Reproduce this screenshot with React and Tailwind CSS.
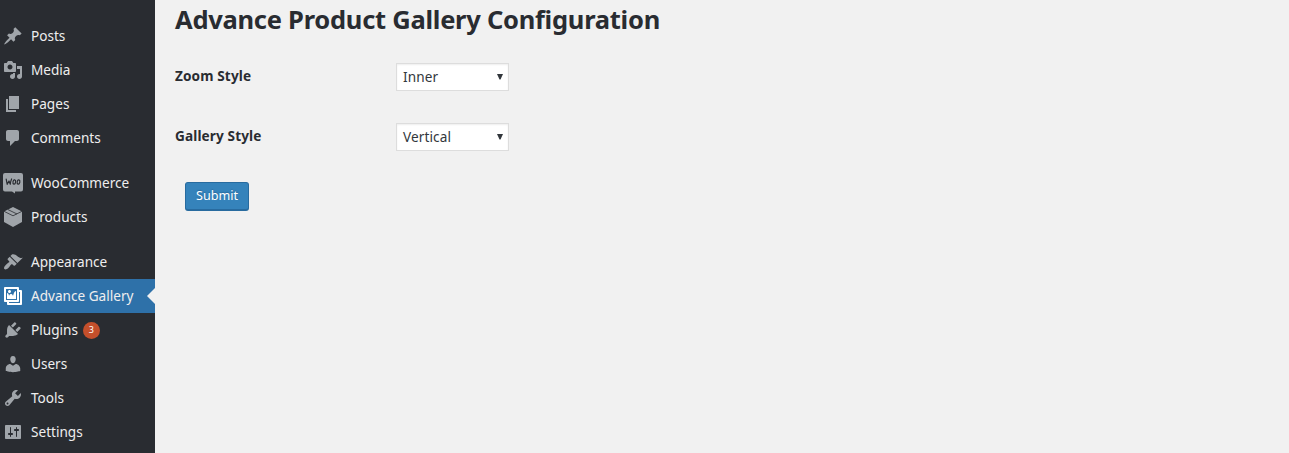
const ICONS = {
  posts: "M10.44 3.02l1.82-1.82 6.36 6.35-1.83 1.82c-1.05-.68-2.48-.57-3.41.36l-.75.75c-.92.93-1.04 2.35-.35 3.41l-1.83 1.82-2.41-2.41-2.8 2.79c-.42.42-3.38 2.71-3.8 2.29s1.86-3.39 2.28-3.81l2.79-2.79L4.1 9.36l1.83-1.82c1.05.69 2.48.57 3.4-.36l.75-.75c.93-.92 1.05-2.35.36-3.41z",
  media: "M13 11V4c0-.55-.45-1-1-1h-1.67L9 1H5L3.67 3H2c-.55 0-1 .45-1 1v7c0 .55.45 1 1 1h10c.55 0 1-.45 1-1zM7 4.5c1.38 0 2.5 1.12 2.5 2.5S8.38 9.5 7 9.5 4.5 8.38 4.5 7 5.62 4.5 7 4.5zM14 6h5v10.5c0 1.38-1.12 2.5-2.5 2.5S14 17.88 14 16.5s1.12-2.5 2.5-2.5c.17 0 .34.02.5.05V9h-3V6zm-4 8.05V13h2v3.5c0 1.38-1.12 2.5-2.5 2.5S7 17.88 7 16.5 8.12 14 9.5 14c.17 0 .34.02.5.05z",
  pages: "M6 15V2h10v13H6zm-1 1h8v2H3V5h2v11z",
  comments: "M5 2h9c1.1 0 2 .9 2 2v7c0 1.1-.9 2-2 2h-2l-5 5v-5H5c-1.1 0-2-.9-2-2V4c0-1.1.9-2 2-2z",
  appearance: "M14.48 11.06L7.41 3.99l1.5-1.5c.5-.56 2.3-.47 3.51.32 1.21.8 1.43 1.28 2.91 2.1 1.18.64 2.45 1.26 4.45.85zm-.71.71L6.7 4.7 4.93 6.47c-.39.39-.39 1.02 0 1.41l1.06 1.06c.39.39.39 1.03 0 1.42-.6.6-1.43 1.11-2.21 1.69-.35.26-.7.53-1.01.84C1.43 14.23.4 16.08 1.4 17.07c.99 1 2.84-.03 4.18-1.36.31-.31.58-.66.85-1.02.57-.78 1.08-1.61 1.69-2.21.39-.39 1.02-.39 1.41 0l1.06 1.06c.39.39 1.02.39 1.41 0z",
  gallery: "M16 4h1.96c.57 0 1.04.47 1.04 1.04v12.92c0 .57-.47 1.04-1.04 1.04H5.04C4.47 19 4 18.53 4 17.96V16H2.04C1.47 16 1 15.53 1 14.96V2.04C1 1.47 1.47 1 2.04 1h12.92c.57 0 1.04.47 1.04 1.04V4zM3 14h11V3H3v11zm5-8.5C8 4.67 7.33 4 6.5 4S5 4.67 5 5.5 5.67 7 6.5 7 8 6.33 8 5.5zm2 4.5s1-5 3-5v8H4V7c2 0 2 3 2 3s.33-2 2-2 2 2 2 2zm7 7V6h-1v8.96c0 .57-.47 1.04-1.04 1.04H6v1h11z",
  plugins: "M13.11 4.36L9.87 7.6 8 5.73l3.24-3.24c.35-.34 1.05-.2 1.56.32.52.51.66 1.21.31 1.55zm-8 1.77l.91-1.12 9.01 9.01-1.19.84c-.71.71-2.63 1.16-3.82 1.16H6.14L4.9 17.26c-.59.59-1.54.59-2.12 0-.59-.58-.59-1.53 0-2.12l1.24-1.24v-3.88c0-1.13.4-3.19 1.09-3.89zm7.26 3.97l3.24-3.24c.34-.35 1.04-.21 1.55.31.52.51.66 1.21.31 1.55l-3.24 3.25z",
  users: "M10 9.25c-2.27 0-2.73-3.44-2.73-3.44C7 4.02 7.82 2 9.97 2c2.16 0 2.98 2.02 2.71 3.81 0 0-.41 3.44-2.68 3.44zm0 2.57L12.72 10c2.39 0 4.52 2.33 4.52 4.53v2.49s-3.65 1.13-7.24 1.13c-3.65 0-7.24-1.13-7.24-1.13v-2.49c0-2.25 1.94-4.48 4.47-4.48z",
  tools: "M16.68 9.77c-1.34 1.34-3.3 1.67-4.95.99l-5.41 6.52c-.99.99-2.59.99-3.58 0s-.99-2.59 0-3.57l6.52-5.42c-.68-1.65-.35-3.61.99-4.95 1.28-1.28 3.12-1.62 4.72-1.06l-2.89 2.89 2.82 2.82 2.86-2.87c.53 1.58.18 3.39-1.08 4.65zM3.81 16.21c.4.39 1.04.39 1.43 0 .4-.4.4-1.04 0-1.43-.39-.4-1.03-.4-1.43 0-.39.39-.39 1.03 0 1.43z",
  settings: "M18 16V4c0-.55-.45-1-1-1H3c-.55 0-1 .45-1 1v12c0 .55.45 1 1 1h14c.55 0 1-.45 1-1zM8 11h1c.55 0 1 .45 1 1s-.45 1-1 1H8v1.5c0 .28-.22.5-.5.5s-.5-.22-.5-.5V13H6c-.55 0-1-.45-1-1s.45-1 1-1h1V5.5c0-.28.22-.5.5-.5s.5.22.5.5V11zm5-2h-1c-.55 0-1-.45-1-1s.45-1 1-1h1V5.5c0-.28.22-.5.5-.5s.5.22.5.5V7h1c.55 0 1 .45 1 1s-.45 1-1 1h-1v5.5c0 .28-.22.5-.5.5s-.5-.22-.5-.5V9z",
};

function Icon({ name }) {
  if (name === "woo") {
    return (
      <svg viewBox="0 0 20 20" className="h-5 w-5 shrink-0 overflow-visible">
        <path fill="currentColor" d="M2 0h16a2 2 0 0 1 2 2v14.500a2 2 0 0 1-2 2H12V20.500L9 18.500H2A2 2 0 0 1 0 16.500V2a2 2 0 0 1 2-2z" />
        <g fill="none" stroke="#292c31" strokeWidth="1.2" strokeLinecap="round" strokeLinejoin="round">
          <path d="M3.200 6.200L4.200 11.300 6 8 7.300 11.300Q7.500 8.300 8.600 6" />
          <ellipse cx="11.300" cy="9" rx="1.300" ry="2.100" transform="rotate(12 11.300 9)" />
          <ellipse cx="15.500" cy="9" rx="1.300" ry="2.100" transform="rotate(12 15.500 9)" />
        </g>
      </svg>
    );
  }
  if (name === "products") {
    return (
      <svg viewBox="0 0 20 20" className="h-5 w-5 shrink-0">
        <path fill="currentColor" d="M10 0L19 4.500V15L10 20 1 15V4.500z" />
        <path fill="none" stroke="#292c31" strokeWidth=".8" d="M1 4.300L10 8.800 19 4.300M5 2.600L14 7" />
      </svg>
    );
  }
  return (
    <svg viewBox="0 0 20 20" className="h-5 w-5 shrink-0">
      <path fill="currentColor" fillRule="evenodd" d={ICONS[name]} />
    </svg>
  );
}

const GROUPS = [
  [
    { icon: "posts", label: "Posts" },
    { icon: "media", label: "Media" },
    { icon: "pages", label: "Pages" },
    { icon: "comments", label: "Comments" },
  ],
  [
    { icon: "woo", label: "WooCommerce" },
    { icon: "products", label: "Products" },
  ],
  [
    { icon: "appearance", label: "Appearance" },
    { icon: "gallery", label: "Advance Gallery", active: true },
    { icon: "plugins", label: "Plugins", badge: "3" },
    { icon: "users", label: "Users" },
    { icon: "tools", label: "Tools" },
    { icon: "settings", label: "Settings" },
  ],
];

function MenuItem({ icon, label, active, badge }) {
  return (
    <li
      className={
        active
          ? "relative flex h-[34px] items-center gap-2 bg-[#2e71a9] pl-[3px] text-white"
          : "flex h-[34px] items-center gap-2 pl-[3px] text-[#a0a5aa]"
      }
    >
      <Icon name={icon} />
      <span className="whitespace-nowrap text-[13.6px] leading-5 text-[#eeeeee]">{label}</span>
      {badge && (
        <span className="-ml-[3px] flex h-[17px] w-[17px] items-center justify-center rounded-full bg-[#c44f2b] pb-px text-[9px] leading-none text-white">
          {badge}
        </span>
      )}
      {active && (
        <span className="absolute right-0 top-1/2 -mt-2 h-0 w-0 border-y-8 border-r-8 border-y-transparent border-r-[#f1f1f1]" />
      )}
    </li>
  );
}

function SelectRow({ label, value }) {
  return (
    <div className="flex h-[28px] items-center">
      <span className="w-[221px] pb-[2px] text-[13.6px] font-bold leading-5 tracking-[0.12px] text-[#292c31]">{label}</span>
      <div className="flex h-[28px] w-[113px] items-center justify-between border border-[#dddddd] bg-white pl-[6px] pr-[5px] text-[13.6px] text-[#32373c] shadow-[inset_0_1px_2px_rgba(0,0,0,0.07)]">
        <span className="tracking-[0.1px]">{value}</span>
        <svg viewBox="0 0 6 6" className="h-[6px] w-[6px]">
          <path fill="#32373c" d="M0 0h6L3.500 5.500h-1z" />
        </svg>
      </div>
    </div>
  );
}

export default function App() {
  return (
    <div className="flex h-[453px] w-full overflow-hidden bg-[#f1f1f1] font-['Noto_Sans',sans-serif]">
      <nav className="flex w-[155px] shrink-0 flex-col gap-[11px] bg-[#292c31] pt-[19px]">
        {GROUPS.map((items, i) => (
          <ul key={i}>
            {items.map((item) => (
              <MenuItem key={item.label} {...item} />
            ))}
          </ul>
        ))}
      </nav>
      <main className="flex flex-col items-start pl-5">
        <h1 className="mt-px h-[62px] whitespace-nowrap text-[25.5px] font-bold leading-[36px] tracking-[-0.26px] text-[#292c31]">
          Advance Product Gallery Configuration
        </h1>
        <div className="flex flex-col gap-8">
          <SelectRow label="Zoom Style" value="Inner" />
          <SelectRow label="Gallery Style" value="Vertical" />
        </div>
        <button className="ml-[10px] mt-[31px] h-[29px] w-[64px] rounded-[3px] border border-b-2 border-[#286b9f] bg-[#3583bb] pt-px text-[12.6px] leading-none text-white [text-shadow:0_-1px_1px_#286b9f]">
          Submit
        </button>
      </main>
    </div>
  );
}
